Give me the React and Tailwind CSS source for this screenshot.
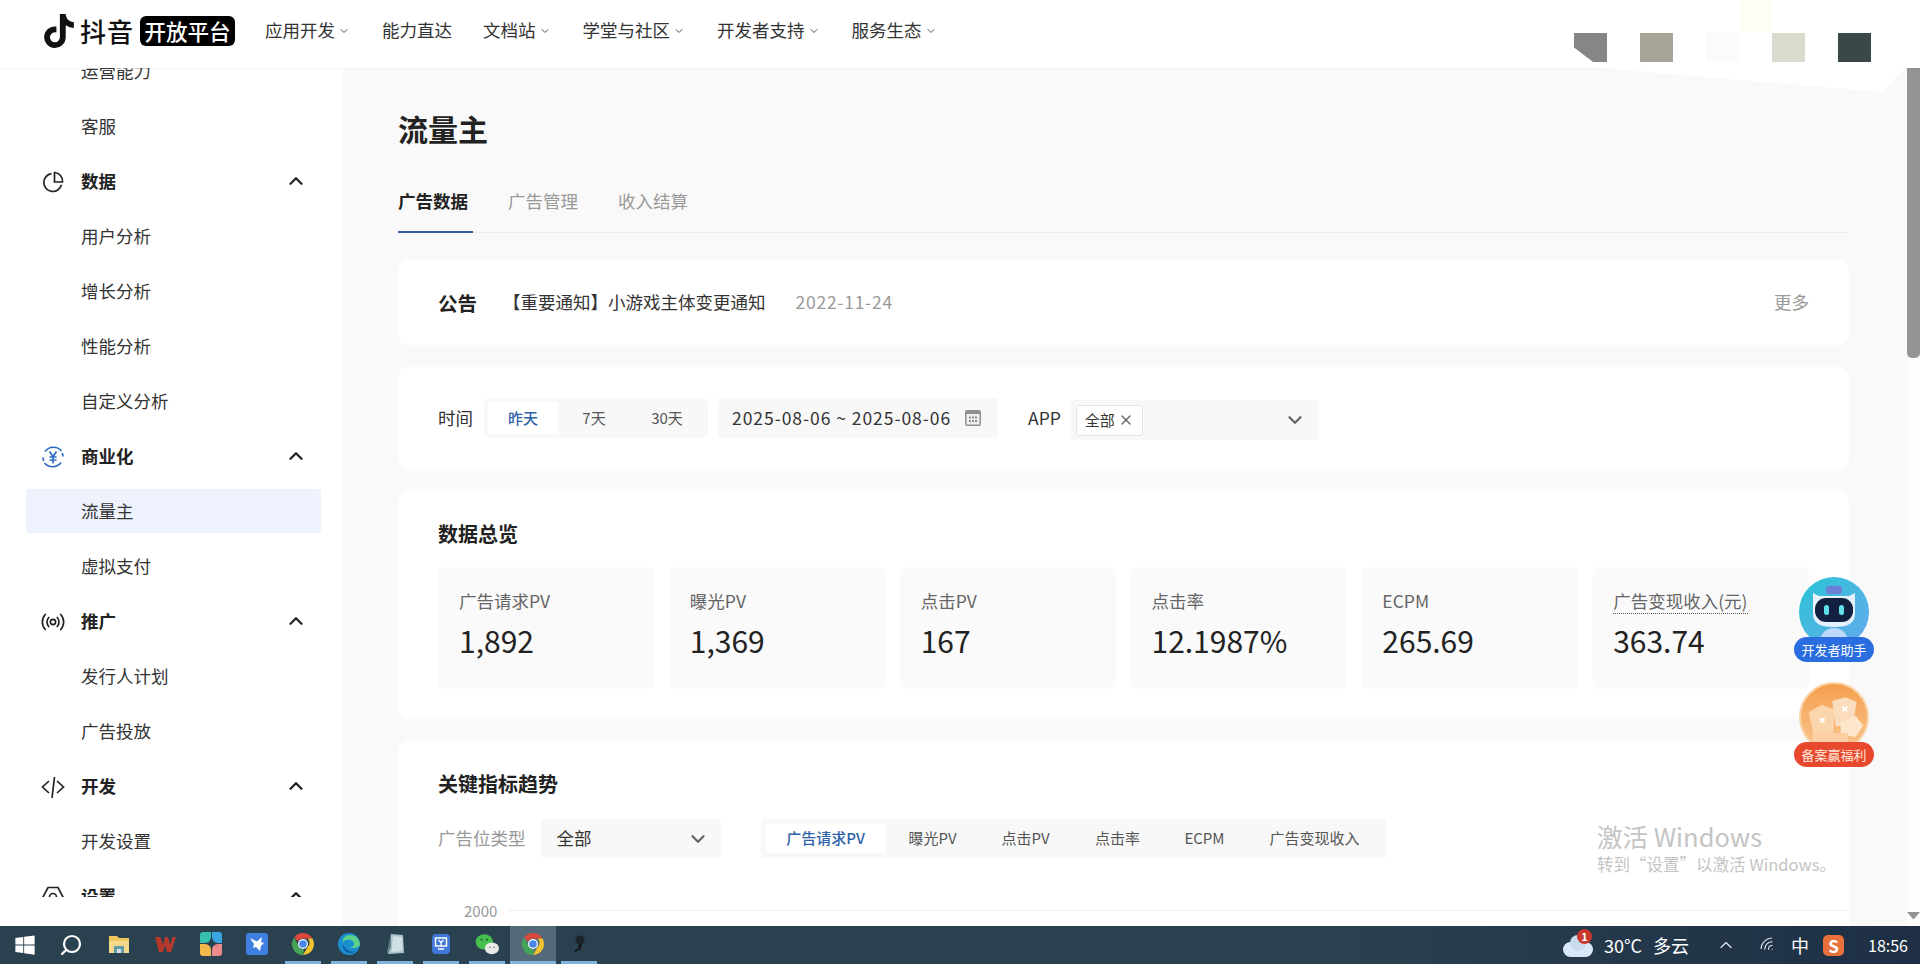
import { ChevronDown, ChevronUp, Search, Wifi, X } from 'lucide-react';
import { FaTiktok, FaWindows } from 'react-icons/fa6';

const NAV = [
  ['应用开发', true],
  ['能力直达', false],
  ['文档站', true],
  ['学堂与社区', true],
  ['开发者支持', true],
  ['服务生态', true],
];

const STATS = [
  ['广告请求PV', '1,892'],
  ['曝光PV', '1,369'],
  ['点击PV', '167'],
  ['点击率', '12.1987%'],
  ['ECPM', '265.69'],
  ['广告变现收入(元)', '363.74', true],
];

// ── Sidebar icons ──
const PieIcon = () => (
  <svg viewBox="0 0 24 24" className="w-[24px] h-[24px]" fill="none" stroke="#222" strokeWidth="1.7">
    <path d="M10.5 3.6a9 9 0 1 0 10 11.2" />
    <path d="M13.5 2.5a8.5 8.5 0 0 1 8 9.5h-8z" />
  </svg>
);

const YuanIcon = () => (
  <svg viewBox="0 0 24 24" className="w-[24px] h-[24px]" fill="none" stroke="#2f6bc0" strokeWidth="1.7">
    <path d="M4 6.5A10.5 10.5 0 0 1 20.5 6" />
    <path d="M20 17.5A10.5 10.5 0 0 1 3.5 18" />
    <path d="M2 12.5a10 10 0 0 0 .8 3.5M22 11.5a10 10 0 0 0-.8-3.5" />
    <path d="M8.5 6.5l3.5 5 3.5-5M12 11.5v7M8.5 12h7M8.5 15h7" />
  </svg>
);

const SignalIcon = () => (
  <svg viewBox="0 0 24 24" className="w-[24px] h-[24px]" fill="none" stroke="#222" strokeWidth="1.7" strokeLinecap="round">
    <circle cx="12" cy="12" r="2.6" />
    <path d="M7.8 7.5a6.5 6.5 0 0 0 0 9M16.2 7.5a6.5 6.5 0 0 1 0 9" />
    <path d="M4.3 4.5a11 11 0 0 0 0 15M19.7 4.5a11 11 0 0 1 0 15" />
  </svg>
);

const CodeIcon = () => (
  <svg viewBox="0 0 24 24" className="w-[24px] h-[24px]" fill="none" stroke="#222" strokeWidth="1.7">
    <path d="M8 6l-6.5 6L8 18M16 6l6.5 6L16 18M13.5 2l-2.5 21" />
  </svg>
);

const GearIcon = () => (
  <svg viewBox="0 0 24 24" className="w-[24px] h-[24px]" fill="none" stroke="#222" strokeWidth="1.7">
    <path d="M7 2.5h10l5 9.5-5 9.5H7L2 12z" />
    <circle cx="12" cy="12" r="3.5" />
  </svg>
);

// ── Taskbar icons ──
const Chrome = () => (
  <svg viewBox="0 0 24 24" className="w-[24px] h-[24px]">
    <path d="M12 1a11 11 0 0 1 9.5 5.5H12a5.5 5.5 0 0 0-5 3L3.2 5.4A11 11 0 0 1 12 1z" fill="#d9483b" />
    <path d="M21.5 6.5A11 11 0 0 1 12 23l4.6-8a5.5 5.5 0 0 0 0-8.5z" fill="#f4c430" />
    <path d="M12 23A11 11 0 0 1 3.2 5.4L7.5 14a5.5 5.5 0 0 0 5.5 3.4L12 23z" fill="#45a556" />
    <circle cx="12" cy="12" r="5" fill="#fff" />
    <circle cx="12" cy="12" r="3.8" fill="#4a87e8" />
  </svg>
);

const Edge = () => (
  <svg viewBox="0 0 24 24" className="w-[24px] h-[24px]">
    <circle cx="12" cy="12" r="11" fill="#1a8fd0" />
    <path d="M23 13c0-6-4.500-10-10-10C8 3 5 7 6 10c2-3 9-4 11 1 1 3-2 4-4 4 3 2 8 1 10-2z" fill="#5ed48a" />
    <path d="M6 12c-1 5 3 9 7 9 2 0 4-.6 5-1.600-5 1-10-2-12-7.400z" fill="#0d5fa8" />
  </svg>
);

const Folder = () => (
  <svg viewBox="0 0 24 24" className="w-[24px] h-[24px]">
    <path d="M2 4h8l2 2h10v15H2z" fill="#f0c75e" />
    <path d="M2 9h20v12H2z" fill="#f5d98a" />
    <path d="M7 14h10v7H7z" fill="#5f9ea8" />
    <path d="M10 17h4v4h-4z" fill="#d8e4e8" />
  </svg>
);

const Wps = () => (
  <svg viewBox="0 0 24 24" className="w-[24px] h-[24px]">
    <path d="M2 5h5.500l2.500 8 2-8h3l2 8 2.500-8H23l-5 15h-4l-2-7-2 7H6z" fill="#b8382c" />
  </svg>
);

const Pinwheel = () => (
  <div className="grid grid-cols-2 gap-[1px] w-[22px] h-[24px]">
    <div className="bg-[#35c0b0] rounded-tl-[3px] rounded-br-[6px]" />
    <div className="bg-[#3aa7e0] rounded-tr-[3px] rounded-bl-[6px]" />
    <div className="bg-[#f2b84a] rounded-bl-[3px] rounded-tr-[6px]" />
    <div className="bg-[#ee8a8a] rounded-br-[3px] rounded-tl-[6px]" />
  </div>
);

const Feather = () => (
  <svg viewBox="0 0 24 24" className="w-[24px] h-[24px]">
    <rect x="1" y="1" width="22" height="22" rx="3" fill="#3f7fe0" />
    <path d="M5 6l7 3.500L17 5l-1 5 3 1-3 3-1 5-4-4-3 1 1-4z" fill="#fff" />
  </svg>
);

const Paper = () => (
  <svg viewBox="0 0 24 24" className="w-[24px] h-[24px]">
    <path d="M8 2l12 1 1 18-16 1z" fill="#a9c4c8" />
    <path d="M8 2L4 20l1 2 3-7z" fill="#66808a" />
    <path d="M10 4l9 1 .5 14-11 1z" fill="#cfdfe2" />
  </svg>
);

const BlueBox = () => (
  <svg viewBox="0 0 24 24" className="w-[24px] h-[24px]">
    <rect x="3" y="2" width="18" height="20" rx="4" fill="#3f78d8" />
    <rect x="6.500" y="6" width="11" height="8" fill="none" stroke="#fff" strokeWidth="1.500" />
    <path d="M9.500 8l2.500 2.500L14.500 8M12 10.500V14M9 17h6" stroke="#fff" strokeWidth="1.300" fill="none" />
  </svg>
);

const Wechat = () => (
  <svg viewBox="0 0 24 24" className="w-[26px] h-[26px]">
    <ellipse cx="9.500" cy="10" rx="8" ry="7" fill="#47c04f" />
    <ellipse cx="16.500" cy="16" rx="6.500" ry="5.500" fill="#e6e9e6" />
    <circle cx="7" cy="8" r="1" fill="#1d6b26" />
    <circle cx="12" cy="8" r="1" fill="#1d6b26" />
    <circle cx="14.500" cy="15" r=".8" fill="#888" />
    <circle cx="18.500" cy="15" r=".8" fill="#888" />
  </svg>
);

const DarkMic = () => (
  <svg viewBox="0 0 24 24" className="w-[24px] h-[24px]">
    <circle cx="13" cy="8" r="4.500" fill="#1c2226" />
    <path d="M12 12l-1 4-4 3 1 1 6-3 1-5z" fill="#15191c" />
    <path d="M15 15l3 3" stroke="#3a4348" strokeWidth="2" />
  </svg>
);

const TASK_ICONS = [
  [Folder, false],
  [Wps, false],
  [Pinwheel, false],
  [Feather, false],
  [Chrome, true],
  [Edge, true],
  [Paper, true],
  [BlueBox, true],
  [Wechat, true],
  [Chrome, true, true],
  [DarkMic, true],
];

const SideGroup = ({ icon, label }) => (
  <div className="h-[55px] flex items-center pl-[41px] pr-[36px] pt-[2px]">
    <span className="w-[40px] shrink-0 flex">{icon}</span>
    <span className="font-bold text-[#222]">{label}</span>
    <ChevronUp className="w-[22px] h-[22px] ml-auto -mt-[2px] text-[#222]" strokeWidth={2.5} />
  </div>
);

const SideItem = ({ label, active }) => (
  <div className="h-[55px] pl-[26px] pr-[22px] pt-[6px] pb-[5px]">
    <div className={`h-full rounded-[3px] flex items-center pl-[55px] text-[#333] ${active ? 'bg-[#edf2fc]' : ''}`}>
      {label}
    </div>
  </div>
);

const Sidebar = () => (
  <aside className="w-[343px] shrink-0 bg-white">
    <div className="h-[829px] overflow-hidden">
      <div className="-mt-[25px]">
        <SideItem label="运营能力" />
        <SideItem label="客服" />
        <SideGroup icon={<PieIcon />} label="数据" />
        <SideItem label="用户分析" />
        <SideItem label="增长分析" />
        <SideItem label="性能分析" />
        <SideItem label="自定义分析" />
        <SideGroup icon={<YuanIcon />} label="商业化" />
        <SideItem label="流量主" active />
        <SideItem label="虚拟支付" />
        <SideGroup icon={<SignalIcon />} label="推广" />
        <SideItem label="发行人计划" />
        <SideItem label="广告投放" />
        <SideGroup icon={<CodeIcon />} label="开发" />
        <SideItem label="开发设置" />
        <SideGroup icon={<GearIcon />} label="设置" />
      </div>
    </div>
  </aside>
);

const Header = () => (
  <header className="h-[68px] shrink-0 bg-white z-10 shadow-[0_1px_2px_rgba(0,0,0,0.04)] flex items-center pl-[48px] pr-[49px] pb-[7px]">
    <FaTiktok className="w-[30px] h-[34px] text-[#111] -ml-[4px] shrink-0" />
    <span className="ml-[6px] text-[26px] font-medium text-[#111] tracking-[1px] leading-none">抖音</span>
    <span className="ml-[6px] w-[95px] h-[30px] rounded-[6px] bg-black text-white text-[21.5px] font-medium leading-none flex items-center justify-center">
      开放平台
    </span>
    <nav className="ml-[30px] flex items-center gap-[31px] text-[#333]">
      {NAV.map(([label, hasMenu]) => (
        <div key={label} className="flex items-center">
          <span>{label}</span>
          {hasMenu && <ChevronDown className="w-[12px] h-[12px] ml-[3px] mr-[1px] text-[#555]" strokeWidth={2} />}
        </div>
      ))}
    </nav>
    {/* blurred-out account area */}
    <div className="ml-auto self-stretch -mb-[7px] flex items-end pb-[3px] gap-[33px]">
      <div className="w-[33px] h-[32px] bg-[#848786] [clip-path:polygon(0_0,100%_0,100%_100%,70%_100%,0_45%)]" />
      <div className="w-[33px] h-[32px] bg-[#a8a498]" />
      <div className="w-[33px] h-[32px] bg-[#fbfbfb]" />
      <div className="w-[33px] h-[32px] -mx-[33px] self-start bg-[#fffef6]" />
      <div className="w-[33px] h-[32px] bg-[#d9dbcd]" />
      <div className="w-[33px] h-[32px] bg-[#3a4948]" />
    </div>
  </header>
);

const Card = ({ className = '', children }) => (
  <section className={`bg-white rounded-[10px] px-[40px] ${className}`}>{children}</section>
);

const CalendarIcon = () => (
  <svg viewBox="0 0 18 18" className="w-[18px] h-[18px] ml-auto">
    <rect x="1" y="1" width="16" height="16" rx="2" fill="#8f8f8f" />
    <rect x="2.500" y="5" width="13" height="10.500" fill="#efefef" />
    <path d="M5 7.500h2v2H5zM8 7.500h2v2H8zM11 7.500h2v2h-2zM5 11h2v2H5zM8 11h2v2H8zM11 11h2v2h-2z" fill="#8f8f8f" />
  </svg>
);

const Robot = () => (
  <div className="w-[70px] h-[70px] rounded-full bg-gradient-to-br from-[#1cc4d4] to-[#62a9ee] flex justify-center items-end overflow-hidden">
    <svg viewBox="0 0 70 70" className="w-[70px] h-[70px]">
      <rect x="27" y="9" width="16" height="8" rx="3" fill="#6d7fd8" />
      <path d="M14 16l6 3h30l6-3v20c0 10-6 14-21 14S14 46 14 36z" fill="#e6f1fe" />
      <rect x="16" y="21" width="38" height="24" rx="11" fill="#12213f" />
      <rect x="25" y="28" width="5" height="10" rx="2.500" fill="#5fe0ea" />
      <rect x="40" y="28" width="5" height="10" rx="2.500" fill="#5fe0ea" />
      <path d="M20 70c0-12 6-19 15-19s15 7 15 19z" fill="#bcd9fb" />
    </svg>
  </div>
);

const Gift = () => (
  <div className="w-[70px] h-[70px] rounded-full bg-gradient-to-b from-[#f5a04d] to-[#f8c48c] border-[2px] border-[#fbd3a8] flex overflow-hidden">
    <svg viewBox="0 0 70 70" className="w-[66px] h-[66px]">
      <path d="M8 30l14-8 14 5-2 26-20 2z" fill="#fbd5ac" />
      <path d="M33 18l14-4 12 5-4 24-18 2z" fill="#fbdcbd" />
      <path d="M42 40l16-6 8 10-8 12-16-2z" fill="#fde6cc" />
      <path d="M12 52h38v18H12z" fill="#fbcfa4" />
      <path d="M20 36l5 5M25 36l-5 5M44 24l5 5M49 24l-5 5" stroke="#fff" strokeWidth="2" />
    </svg>
  </div>
);

const Floating = () => (
  <div className="absolute left-[1794px] top-[577px] w-[80px] flex flex-col items-center gap-[20px]">
    <div className="flex flex-col items-center">
      <Robot />
      <div className="-mt-[10px] w-[80px] h-[25px] rounded-full bg-[#2a6de0] text-white text-[13px] leading-[25px] text-center">
        开发者助手
      </div>
    </div>
    <div className="flex flex-col items-center">
      <Gift />
      <div className="-mt-[10px] w-[80px] h-[25px] rounded-full bg-[#e8482e] text-[#ffe9dc] text-[13px] leading-[25px] text-center">
        备案赢福利
      </div>
    </div>
  </div>
);

const Main = () => (
  <main className="flex-1 min-w-0 bg-[#f9f9f9] overflow-hidden pl-[55px] pr-[58px] pt-[40px]">
    <h1 className="text-[30px] leading-[40px] font-bold text-[#222]">流量主</h1>

    <div className="mt-[22px] h-[63px] flex border-b border-[#ececec]">
      <div className="w-[75px] h-[63px] border-b-[2px] border-[#2f5d9b] font-bold text-[#222] pt-[18px]">广告数据</div>
      <div className="ml-[35px] text-[#999] pt-[18px]">广告管理</div>
      <div className="ml-[40px] text-[#999] pt-[18px]">收入结算</div>
    </div>

    <div className="mt-[27px] flex flex-col gap-[22px]">
      <Card className="h-[85px] flex items-center">
        <span className="text-[19.5px] font-bold text-[#222]">公告</span>
        <span className="ml-[26px] text-[#333]">【重要通知】小游戏主体变更通知</span>
        <span className="ml-[30px] text-[#999] tracking-[0.75px]">2022-11-24</span>
        <span className="ml-auto text-[#999]">更多</span>
      </Card>

      <Card className="h-[102px] flex items-center">
        <span className="text-[#333]">时间</span>
        <div className="ml-[11px] w-[224px] h-[40px] p-[4px] rounded-[4px] bg-[#f8f8f8] flex text-[15px]">
          <div className="w-[70px] rounded-[3px] bg-white text-[#2f62a8] font-medium flex items-center justify-center">昨天</div>
          <div className="w-[72px] text-[#555] flex items-center justify-center">7天</div>
          <div className="w-[74px] text-[#555] flex items-center justify-center">30天</div>
        </div>
        <div className="ml-[10px] w-[280px] h-[40px] rounded-[4px] bg-[#f8f8f8] pl-[14px] pr-[16px] flex items-center text-[#333]">
          <span className="tracking-[0.95px]">2025-08-06 ~ 2025-08-06</span>
          <CalendarIcon />
        </div>
        <span className="ml-[30px] text-[#333]">APP</span>
        <div className="ml-[10px] mt-[4px] w-[248px] h-[40px] rounded-[3px] bg-[#f8f8f8] pl-[5px] pr-[13px] flex items-center">
          <div className="h-[31px] w-[67px] bg-white border border-[#e4e4e4] rounded-[3px] flex items-center justify-center text-[15px] text-[#333]">
            全部
            <X className="w-[16px] h-[16px] ml-[3px] text-[#666]" />
          </div>
          <ChevronDown className="w-[22px] h-[22px] ml-auto text-[#666]" strokeWidth={2.5} />
        </div>
      </Card>

      <Card className="h-[228px] pt-[29px]">
        <h2 className="text-[20px] leading-[28px] font-bold text-[#222]">数据总览</h2>
        <div className="mt-[19px] grid grid-cols-6 gap-[14px]">
          {STATS.map(([label, value, dotted]) => (
            <div key={label} className="h-[122px] rounded-[8px] bg-[#fafafa] pl-[21px] pt-[22px]">
              <div className="h-[24px] leading-[24px] text-[#666]">
                <span className={dotted ? 'border-b border-dotted border-[#555]' : ''}>{label}</span>
              </div>
              <div className="mt-[7px] text-[30px] leading-[40px] text-[#222]">{value}</div>
            </div>
          ))}
        </div>
      </Card>

      <Card className="h-[400px] pt-[29px]">
        <h2 className="text-[20px] leading-[28px] font-bold text-[#222]">关键指标趋势</h2>
        <div className="mt-[21px] h-[39px] flex items-center">
          <span className="text-[#999]">广告位类型</span>
          <div className="ml-[15px] w-[180px] h-[39px] rounded-[3px] bg-[#f8f8f8] pl-[16px] pr-[12px] flex items-center text-[#333]">
            全部
            <ChevronDown className="w-[22px] h-[22px] ml-auto text-[#666]" strokeWidth={2.5} />
          </div>
          <div className="ml-[40px] w-[625px] h-[39px] rounded-[3px] bg-[#f8f8f8] pl-[5px] py-[5px] flex text-[15px] text-[#555]">
            <div className="w-[120px] rounded-[3px] bg-white text-[#2f62a8] font-medium flex items-center justify-center">广告请求PV</div>
            <div className="w-[94px] flex items-center justify-center">曝光PV</div>
            <div className="w-[92px] flex items-center justify-center">点击PV</div>
            <div className="w-[92px] flex items-center justify-center">点击率</div>
            <div className="w-[82px] flex items-center justify-center">ECPM</div>
            <div className="w-[138px] flex items-center justify-center">广告变现收入</div>
          </div>
        </div>
        <div className="mt-[44px] -mr-[39px] flex items-center">
          <span className="ml-[26px] text-[15px] leading-[20px] text-[#999] -translate-y-[1px]">2000</span>
          <div className="ml-[12px] flex-1 h-px bg-[#eeeeee] -translate-y-[2px]" />
        </div>
      </Card>
    </div>
  </main>
);

const Scrollbar = () => (
  <div className="w-[13px] shrink-0 bg-[#fdfdfd] flex flex-col">
    <div className="h-[290px] rounded-b-[5px] bg-[#949494]" />
    <div className="mt-auto mb-[7px] border-x-[6px] border-x-transparent border-t-[7px] border-t-[#949494]" />
  </div>
);

const ChevronUpThin = () => (
  <ChevronUp className="ml-[27px] w-[20px] h-[20px] text-[#e6ecf2]" strokeWidth={1.4} />
);

const Taskbar = () => (
  <footer className="h-[38px] shrink-0 bg-gradient-to-r from-[#2a4150] via-[#2a4150] via-70% to-[#1e2f45] flex items-stretch pl-[2px] pr-[12px] text-white">
    <div className="w-[46px] flex items-center justify-center">
      <FaWindows className="w-[22px] h-[22px] text-white" />
    </div>
    <div className="w-[46px] mr-[2px] flex items-center justify-center">
      <Search className="w-[24px] h-[24px] text-white -scale-x-100" strokeWidth={2.2} />
    </div>
    {TASK_ICONS.map(([Icon, running, active], i) => (
      <div key={i} className={`w-[46px] flex flex-col ${active ? 'bg-[#556a78]' : ''}`}>
        <div className="flex-1 flex items-center justify-center">
          <Icon />
        </div>
        <div className={`h-[3px] ${active ? '' : 'mx-[5px]'} ${running ? 'bg-[#7fb4e0]' : ''}`} />
      </div>
    ))}

    <div className="ml-auto flex items-center">
      <div className="relative w-[30px] h-[24px] mr-[11px]">
        <div className="absolute left-0 bottom-0 w-[30px] h-[15px] rounded-full bg-[#d9e8f7]" />
        <div className="absolute left-[7px] top-[2px] w-[16px] h-[16px] rounded-full bg-[#c9dcf0]" />
        <div className="absolute left-[14px] -top-[4px] w-[15px] h-[15px] rounded-full bg-[#c8382c] text-[11px] leading-[15px] text-center font-bold">1</div>
      </div>
      <span className="text-[18px]">30°C</span>
      <span className="ml-[11px] text-[18px]">多云</span>
      <ChevronUpThin />
      <Wifi className="ml-[23px] w-[18px] h-[18px] -rotate-45 text-[#dfe6ec]" strokeWidth={1.5} />
      <span className="ml-[14px] text-[18px]">中</span>
      <div className="ml-[14px] w-[21px] h-[21px] rounded-[5px] bg-[#e8703a] text-white text-[17px] font-bold leading-[21px] text-center">S</div>
      <span className="ml-[24px] text-[16px]">18:56</span>
    </div>
  </footer>
);

export default function App() {
  return (
    <div className="relative w-[1920px] h-[964px] flex flex-col overflow-hidden bg-white text-[17.5px] font-['Noto_Sans_CJK_SC','Noto_Sans',sans-serif]">
      <Header />
      <div className="flex-1 min-h-0 flex">
        <Sidebar />
        <Main />
        <Scrollbar />
      </div>
      <Taskbar />

      {/* white corner the header menu leaves over the page */}
      <svg viewBox="0 0 320 32" className="absolute left-[1590px] top-[62px] w-[320px] h-[32px] z-20">
        <path d="M0 0L10 6L293 30L318 2V0Z" fill="#fff" />
      </svg>

      <Floating />

      {/* Windows activation watermark */}
      <div className="absolute left-[1597px] top-[819px] text-[#c4c4c4] pointer-events-none">
        <div className="text-[25.5px] leading-[34px]">激活 Windows</div>
        <div className="text-[16.5px] leading-[22px]">转到“设置”以激活 Windows。</div>
      </div>
    </div>
  );
}
